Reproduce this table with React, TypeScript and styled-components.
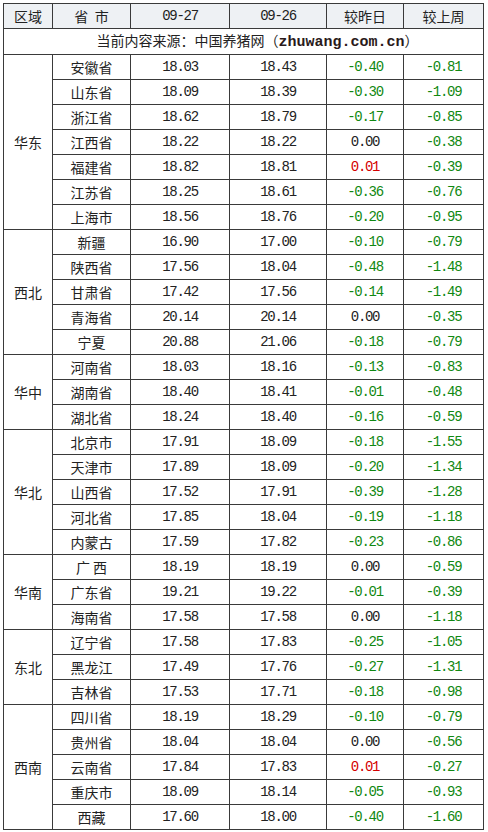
import React from "react";
import styled, { createGlobalStyle } from "styled-components";

const Global = createGlobalStyle`
  html, body { margin: 0; padding: 0; background: #ffffff; }
  body { font-family: "Noto Sans CJK SC", "Liberation Sans", sans-serif; }
`;

const Page = styled.div`
  padding: 3px 0 0 3px;
`;

const Table = styled.table`
  border-collapse: collapse;
  table-layout: fixed;
  width: 480px;
  border: 1px solid #3a3a3a;
`;

const Row = styled.tr`
  height: 25px;
`;

const Cell = styled.td<{ $tone?: "up" | "down" | "flat"; $num?: boolean; $head?: boolean }>`
  border: 1px solid #3a3a3a;
  padding: 0;
  text-align: center;
  vertical-align: middle;
  line-height: 23px;
  font-size: ${(p) => (p.$num ? "14px" : "14px")};
  font-family: ${(p) =>
    p.$num
      ? '"Liberation Mono", "DejaVu Sans Mono", monospace'
      : '"Noto Sans CJK SC", "Liberation Sans", sans-serif'};
  letter-spacing: ${(p) => (p.$num ? "-1.3px" : "0")};
  background: ${(p) => (p.$head ? "#eef1f4" : "#ffffff")};
  color: ${(p) =>
    p.$tone === "down" ? "#118811" : p.$tone === "up" ? "#d40000" : "#222222"};
  white-space: nowrap;
`;

const SourceCell = styled.td`
  border: 1px solid #3a3a3a;
  padding: 0 0 0 28px;
  text-align: center;
  vertical-align: middle;
  line-height: 23px;
  font-size: 14px;
  color: #222222;
  font-family: "Noto Sans CJK SC", "Liberation Sans", sans-serif;
  white-space: nowrap;
`;

const Site = styled.span`
  font-family: "Liberation Mono", "DejaVu Sans Mono", monospace;
  font-weight: bold;
  font-size: 15px;
  color: #2a1a1a;
`;

type D = [string, string, string, string, string];

const groups: { region: string; rows: D[] }[] = [
  {
    region: "华东",
    rows: [
      ["安徽省", "18.03", "18.43", "-0.40", "-0.81"],
      ["山东省", "18.09", "18.39", "-0.30", "-1.09"],
      ["浙江省", "18.62", "18.79", "-0.17", "-0.85"],
      ["江西省", "18.22", "18.22", "0.00", "-0.38"],
      ["福建省", "18.82", "18.81", "0.01", "-0.39"],
      ["江苏省", "18.25", "18.61", "-0.36", "-0.76"],
      ["上海市", "18.56", "18.76", "-0.20", "-0.95"],
    ],
  },
  {
    region: "西北",
    rows: [
      ["新疆", "16.90", "17.00", "-0.10", "-0.79"],
      ["陕西省", "17.56", "18.04", "-0.48", "-1.48"],
      ["甘肃省", "17.42", "17.56", "-0.14", "-1.49"],
      ["青海省", "20.14", "20.14", "0.00", "-0.35"],
      ["宁夏", "20.88", "21.06", "-0.18", "-0.79"],
    ],
  },
  {
    region: "华中",
    rows: [
      ["河南省", "18.03", "18.16", "-0.13", "-0.83"],
      ["湖南省", "18.40", "18.41", "-0.01", "-0.48"],
      ["湖北省", "18.24", "18.40", "-0.16", "-0.59"],
    ],
  },
  {
    region: "华北",
    rows: [
      ["北京市", "17.91", "18.09", "-0.18", "-1.55"],
      ["天津市", "17.89", "18.09", "-0.20", "-1.34"],
      ["山西省", "17.52", "17.91", "-0.39", "-1.28"],
      ["河北省", "17.85", "18.04", "-0.19", "-1.18"],
      ["内蒙古", "17.59", "17.82", "-0.23", "-0.86"],
    ],
  },
  {
    region: "华南",
    rows: [
      ["广 西", "18.19", "18.19", "0.00", "-0.59"],
      ["广东省", "19.21", "19.22", "-0.01", "-0.39"],
      ["海南省", "17.58", "17.58", "0.00", "-1.18"],
    ],
  },
  {
    region: "东北",
    rows: [
      ["辽宁省", "17.58", "17.83", "-0.25", "-1.05"],
      ["黑龙江", "17.49", "17.76", "-0.27", "-1.31"],
      ["吉林省", "17.53", "17.71", "-0.18", "-0.98"],
    ],
  },
  {
    region: "西南",
    rows: [
      ["四川省", "18.19", "18.29", "-0.10", "-0.79"],
      ["贵州省", "18.04", "18.04", "0.00", "-0.56"],
      ["云南省", "17.84", "17.83", "0.01", "-0.27"],
      ["重庆市", "18.09", "18.14", "-0.05", "-0.93"],
      ["西藏", "17.60", "18.00", "-0.40", "-1.60"],
    ],
  },
];

const tone = (v: string): "up" | "down" | "flat" =>
  v.startsWith("-") ? "down" : parseFloat(v) > 0 ? "up" : "flat";

export default function App() {
  return (
    <Page>
      <Global />
      <Table>
        <colgroup>
          <col style={{ width: 49 }} />
          <col style={{ width: 78 }} />
          <col style={{ width: 99 }} />
          <col style={{ width: 97 }} />
          <col style={{ width: 77 }} />
          <col style={{ width: 80 }} />
        </colgroup>
        <tbody>
          <Row>
            <Cell $head>区域</Cell>
            <Cell $head>省&nbsp;&nbsp;市</Cell>
            <Cell $head $num>09-27</Cell>
            <Cell $head $num>09-26</Cell>
            <Cell $head>较昨日</Cell>
            <Cell $head>较上周</Cell>
          </Row>
          <Row>
            <SourceCell colSpan={6}>
              当前内容来源：中国养猪网（<Site>zhuwang.com.cn</Site>）
            </SourceCell>
          </Row>
          {groups.map((g) =>
            g.rows.map((r, i) => (
              <Row key={g.region + r[0]}>
                {i === 0 && <Cell rowSpan={g.rows.length}>{g.region}</Cell>}
                <Cell>{r[0]}</Cell>
                <Cell $num>{r[1]}</Cell>
                <Cell $num>{r[2]}</Cell>
                <Cell $num $tone={tone(r[3])}>{r[3]}</Cell>
                <Cell $num $tone={tone(r[4])}>{r[4]}</Cell>
              </Row>
            ))
          )}
        </tbody>
      </Table>
    </Page>
  );
}
